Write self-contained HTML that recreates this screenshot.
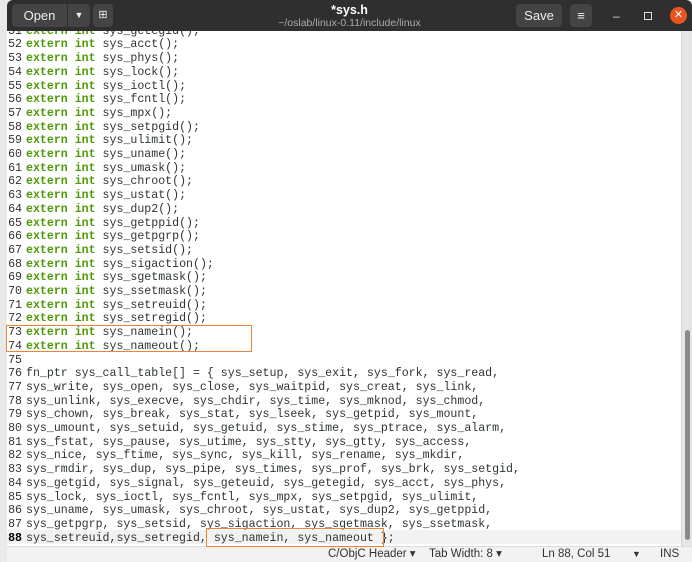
<!DOCTYPE html>
<html><head><style>
*{margin:0;padding:0;box-sizing:border-box}
body{width:692px;height:562px;overflow:hidden;background:#e9e9e9;position:relative;font-family:"Liberation Sans",sans-serif}
#tb{position:absolute;left:7px;top:0;width:685px;height:31px;background:#2f2f2f;border-radius:6px 6px 0 0}
.btn{position:absolute;background:#444;border-radius:4px;color:#eee;font-size:13px;text-align:center;line-height:23px;top:4px;height:23px}
#ed{position:absolute;left:7px;top:31px;width:674px;height:515px;background:#fff;overflow:hidden}
.r{position:absolute;left:0;height:14px;font-family:"Liberation Mono",monospace;font-size:11.6px;line-height:14px;color:#2e3436;white-space:pre}
.n{position:absolute;left:0;width:15px;text-align:right;color:#333}
.c{position:absolute;left:19px}
.k{color:#4e9a06;font-weight:bold}
#sb{position:absolute;left:681px;top:31px;width:11px;height:515px;background:#e6e6e6;border-left:1px solid #d5d5d5}
#th{position:absolute;left:685px;top:330px;width:5px;height:210px;background:#8a8a8a;border-radius:3px}
#st{position:absolute;left:7px;top:546px;width:685px;height:16px;background:#f2f2f2;border-top:1px solid #dcdcdc;font-size:11.5px;color:#333;line-height:15px}
.box{position:absolute;border:1.5px solid #e8853b}
</style></head><body>
<div id="tb">
<div class="btn" style="left:5px;width:55px;border-radius:4px 0 0 4px">Open</div>
<div class="btn" style="left:61px;width:22px;border-radius:0 4px 4px 0;font-size:9px">▼</div>
<div class="btn" style="left:86px;width:20px;font-size:11px">⊞</div>
<div style="position:absolute;left:0;width:685px;top:3px;text-align:center;color:#fff;font-weight:bold;font-size:12.5px">*sys.h</div>
<div style="position:absolute;left:0;width:685px;top:17px;text-align:center;color:#aaa;font-size:10.5px">~/oslab/linux-0.11/include/linux</div>
<div class="btn" style="left:509px;width:46px">Save</div>
<div class="btn" style="left:563px;width:22px">≡</div>
<div style="position:absolute;left:606px;top:9px;color:#ddd;font-size:12px">–</div>
<div style="position:absolute;left:637px;top:12px;width:8px;height:8px;border:1.5px solid #ddd"></div>
<div style="position:absolute;left:663px;top:7px;width:17px;height:17px;border-radius:50%;background:#e95420;color:#fff;font-size:11px;text-align:center;line-height:17px">✕</div>
</div>
<div id="ed">
<div style="position:absolute;left:0;top:499px;width:674px;height:14px;background:#f2f2f2"></div>
<div id="lines"></div>
</div>
<div id="sb"></div><div id="th"></div>
<div id="st">
<span style="position:absolute;left:321px">C/ObjC Header ▾</span>
<span style="position:absolute;left:422px">Tab Width: 8 ▾</span>
<span style="position:absolute;left:535px">Ln 88, Col 51</span>
<span style="position:absolute;left:625px;font-size:9px">▼</span>
<span style="position:absolute;left:653px">INS</span>
</div>
<div class="box" style="left:6px;top:325px;width:246px;height:27px"></div>
<div class="box" style="left:206px;top:528px;width:178px;height:19px"></div>
<script>
(function(){
var ex=["getegid","acct","phys","lock","ioctl","fcntl","mpx","setpgid","ulimit","uname","umask","chroot","ustat","dup2","getppid","getpgrp","setsid","sigaction","sgetmask","ssetmask","setreuid","setregid","namein","nameout"];
var L={};ex.forEach(function(s,i){L[51+i]='<span class="k">extern</span> <span class="k">int</span> sys_'+s+'();'});
L[75]='';
var t=["fn_ptr sys_call_table[] = { sys_setup, sys_exit, sys_fork, sys_read,",
"sys_write, sys_open, sys_close, sys_waitpid, sys_creat, sys_link,",
"sys_unlink, sys_execve, sys_chdir, sys_time, sys_mknod, sys_chmod,",
"sys_chown, sys_break, sys_stat, sys_lseek, sys_getpid, sys_mount,",
"sys_umount, sys_setuid, sys_getuid, sys_stime, sys_ptrace, sys_alarm,",
"sys_fstat, sys_pause, sys_utime, sys_stty, sys_gtty, sys_access,",
"sys_nice, sys_ftime, sys_sync, sys_kill, sys_rename, sys_mkdir,",
"sys_rmdir, sys_dup, sys_pipe, sys_times, sys_prof, sys_brk, sys_setgid,",
"sys_getgid, sys_signal, sys_geteuid, sys_getegid, sys_acct, sys_phys,",
"sys_lock, sys_ioctl, sys_fcntl, sys_mpx, sys_setpgid, sys_ulimit,",
"sys_uname, sys_umask, sys_chroot, sys_ustat, sys_dup2, sys_getppid,",
"sys_getpgrp, sys_setsid, sys_sigaction, sys_sgetmask, sys_ssetmask,",
"sys_setreuid,sys_setregid, sys_namein, sys_nameout };"];
t.forEach(function(s,i){L[76+i]=s});
var h='';for(var n=51;n<=88;n++){var y=7.4+(n-52)*13.7;
h+='<div class="r" style="top:'+y.toFixed(1)+'px"><span class="n"'+(n==88?' style="font-weight:bold;color:#000"':'')+'>'+n+'</span><span class="c">'+L[n]+'</span></div>';}
document.getElementById('lines').innerHTML=h;
})();
</script>
</body></html>
